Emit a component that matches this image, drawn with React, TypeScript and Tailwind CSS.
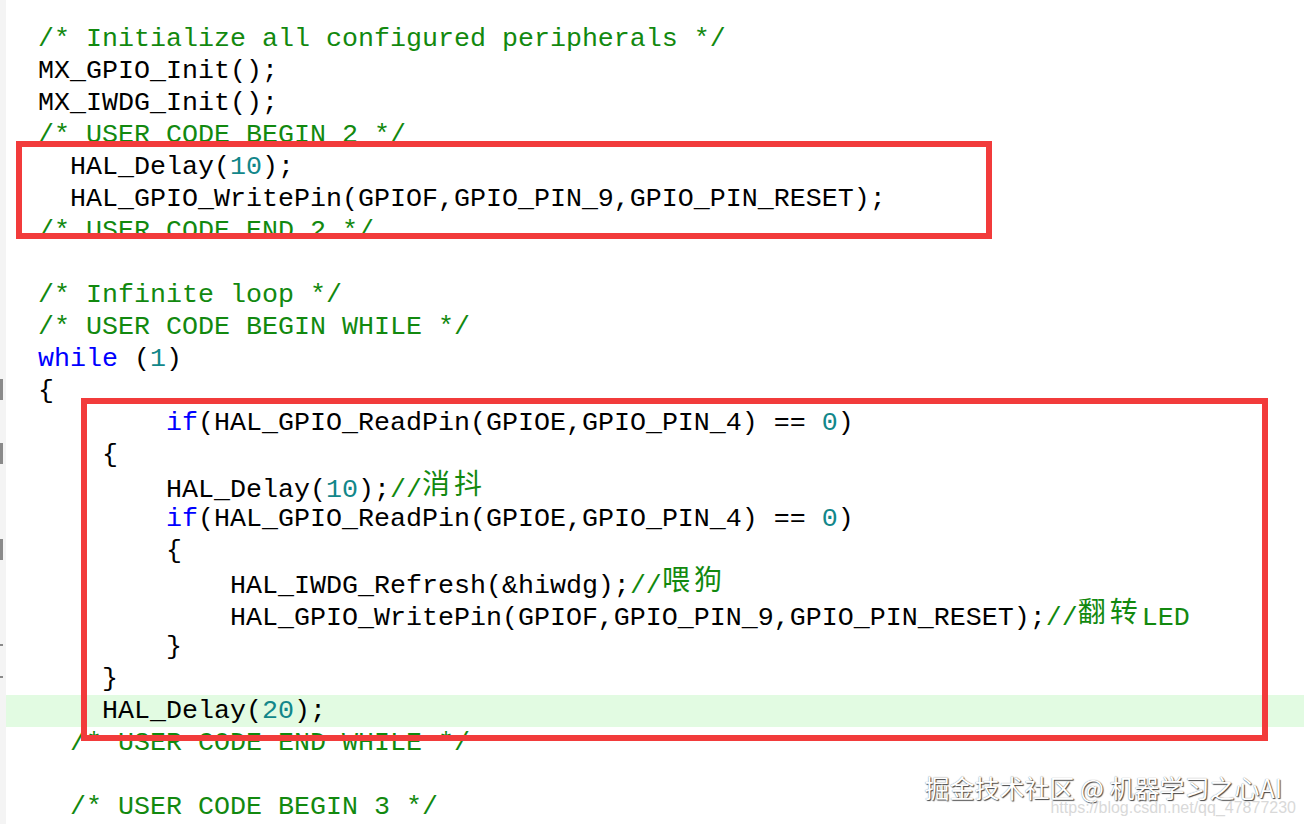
type Seg = { t: string; c?: "cm" | "kw" | "num" | "cjk" };
type Line = { segs: Seg[]; hl?: boolean; mark?: "open" | "close" };

const lines: Line[] = [
  { segs: [{ t: "/* Initialize all configured peripherals */", c: "cm" }] },
  { segs: [{ t: "MX_GPIO_Init();" }] },
  { segs: [{ t: "MX_IWDG_Init();" }] },
  { segs: [{ t: "/* USER CODE BEGIN 2 */", c: "cm" }] },
  { segs: [{ t: "  HAL_Delay(" }, { t: "10", c: "num" }, { t: ");" }] },
  { segs: [{ t: "  HAL_GPIO_WritePin(GPIOF,GPIO_PIN_9,GPIO_PIN_RESET);" }] },
  { segs: [{ t: "/* USER CODE END 2 */", c: "cm" }] },
  { segs: [{ t: "" }] },
  { segs: [{ t: "/* Infinite loop */", c: "cm" }] },
  { segs: [{ t: "/* USER CODE BEGIN WHILE */", c: "cm" }] },
  { segs: [{ t: "while", c: "kw" }, { t: " (" }, { t: "1", c: "num" }, { t: ")" }] },
  { segs: [{ t: "{" }], mark: "open" },
  {
    segs: [
      { t: "        " },
      { t: "if", c: "kw" },
      { t: "(HAL_GPIO_ReadPin(GPIOE,GPIO_PIN_4) == " },
      { t: "0", c: "num" },
      { t: ")" },
    ],
  },
  { segs: [{ t: "    {" }], mark: "open" },
  {
    segs: [
      { t: "        HAL_Delay(" },
      { t: "10", c: "num" },
      { t: ");" },
      { t: "//", c: "cm" },
      { t: "消抖", c: "cjk" },
    ],
  },
  {
    segs: [
      { t: "        " },
      { t: "if", c: "kw" },
      { t: "(HAL_GPIO_ReadPin(GPIOE,GPIO_PIN_4) == " },
      { t: "0", c: "num" },
      { t: ")" },
    ],
  },
  { segs: [{ t: "        {" }], mark: "open" },
  {
    segs: [
      { t: "            HAL_IWDG_Refresh(&hiwdg);" },
      { t: "//", c: "cm" },
      { t: "喂狗", c: "cjk" },
    ],
  },
  {
    segs: [
      { t: "            HAL_GPIO_WritePin(GPIOF,GPIO_PIN_9,GPIO_PIN_RESET);" },
      { t: "//", c: "cm" },
      { t: "翻转", c: "cjk" },
      { t: "LED", c: "cm" },
    ],
  },
  { segs: [{ t: "        }" }], mark: "close" },
  { segs: [{ t: "    }" }], mark: "close" },
  { segs: [{ t: "    HAL_Delay(" }, { t: "20", c: "num" }, { t: ");" }], hl: true },
  { segs: [{ t: "  /* USER CODE END WHILE */", c: "cm" }] },
  { segs: [{ t: "" }] },
  { segs: [{ t: "  /* USER CODE BEGIN 3 */", c: "cm" }] },
];

function Segment({ s }: { s: Seg }) {
  if (s.c === "cm") return <span className="text-[#12890f]">{s.t}</span>;
  if (s.c === "kw") return <span className="text-[#0000ff]">{s.t}</span>;
  if (s.c === "num") return <span className="text-[#12878a]">{s.t}</span>;
  if (s.c === "cjk")
    return (
      <span className="relative -top-[3px] text-[#12890f] text-[28px] leading-none tracking-[4px] font-['Noto_Sans_CJK_SC',sans-serif]">
        {s.t}
      </span>
    );
  return <span>{s.t}</span>;
}

export default function App() {
  return (
    <div className="relative w-full h-[824px] overflow-hidden bg-white">
      <div className="flex h-full">
        {/* fold gutter */}
        <div className="w-[6px] h-full bg-[#f4f4f4] pt-[23px] flex flex-col">
          {lines.map((l, i) => (
            <div key={i} className="h-8 shrink-0 relative">
              {l.mark === "open" && (
                <div className="absolute left-0 top-[4px] w-[3px] h-[21px] bg-[#8a8a8a]" />
              )}
              {l.mark === "close" && (
                <div className="absolute left-0 top-[13px] w-[3px] h-[2px] bg-[#8a8a8a]" />
              )}
            </div>
          ))}
        </div>

        {/* code */}
        <div className="flex-1 pt-[23px] flex flex-col font-['Liberation_Mono',monospace] text-[26.67px] leading-8 text-black">
          {lines.map((l, i) => (
            <div
              key={i}
              className={`h-8 shrink-0 pl-[32px] whitespace-pre ${l.hl ? "bg-[#e2fbe2]" : ""}`}
            >
              {l.segs.map((s, j) => (
                <Segment key={j} s={s} />
              ))}
            </div>
          ))}
        </div>
      </div>

      {/* annotation boxes */}
      <div className="absolute left-[16px] top-[141px] w-[976px] h-[98px] border-[6px] border-[#f23b3b]" />
      <div className="absolute left-[81px] top-[398px] w-[1187px] h-[343px] border-[6px] border-[#f23b3b]" />

      {/* watermark */}
      <div className="absolute right-[8px] bottom-[8px] flex flex-col items-end">
        <div className="pr-[14px] text-[25px] leading-[25px] text-white whitespace-nowrap font-['Noto_Sans_CJK_SC',sans-serif] [text-shadow:1px_1px_1px_#444,0_0_1px_#777]">
          掘金技术社区 @ 机器学习之心AI
        </div>
        <div className="text-[16px] leading-4 text-[#d9d9d9] whitespace-nowrap font-['Liberation_Sans',sans-serif]">
          https://blog.csdn.net/qq_47877230
        </div>
      </div>
    </div>
  );
}
